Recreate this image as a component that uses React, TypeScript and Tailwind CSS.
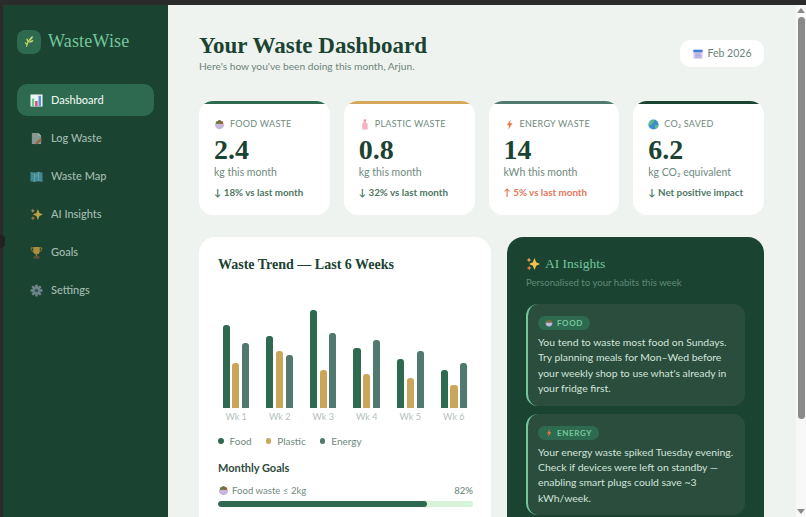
import type { ReactNode } from "react";

const serif = "font-['Liberation_Serif',serif]";

function ChartIcon() {
  return (
    <svg viewBox="0 0 14 14" className="w-[13px] h-[13px]">
      <rect x="0.5" y="0.5" width="13" height="13" fill="#eef2f4" />
      <rect x="2" y="5" width="2.6" height="8" fill="#5fd08a" />
      <rect x="5.6" y="7.5" width="2.6" height="5.5" fill="#e8407a" />
      <rect x="9.2" y="2" width="2.6" height="11" fill="#4a8fe0" />
    </svg>
  );
}

function PageIcon() {
  return (
    <svg viewBox="0 0 14 14" className="w-[13px] h-[13px]">
      <path d="M2 1h7l3 3v9H2z" fill="#a9b3ae" />
      <path d="M9 1l3 3H9z" fill="#d5dbd8" />
      <path d="M11.5 6.5l1.5 1.5-5 5-2 .4.4-2z" fill="#c9694a" />
    </svg>
  );
}

function MapIcon() {
  return (
    <svg viewBox="0 0 14 14" className="w-[13px] h-[13px]">
      <path d="M0.5 2l4.3 1 4.4-1 4.3 1v10l-4.3-1-4.4 1-4.3-1z" fill="#4c9fb5" />
      <path d="M4.8 3v10M9.2 2v10" stroke="#9fd4de" strokeWidth="0.7" />
      <path d="M6 5l2-1 .6 2-1 2-1.4-1z" fill="#6fb98a" />
    </svg>
  );
}

function SparkIcon({ size = 13 }: { size?: number }) {
  return (
    <svg viewBox="0 0 14 14" style={{ width: size, height: size }}>
      <path d="M8.5 1L10.2 5.3 14 7 10.2 8.7 8.5 13 6.8 8.7 3 7 6.8 5.3z" fill="#f2c14e" />
      <path d="M3 0.5l.7 1.8 1.8.7-1.8.7L3 5.5l-.7-1.8L.5 3l1.8-.7z" fill="#f5a65b" />
      <path d="M3.2 8.5l.7 1.8 1.8.7-1.8.7-.7 1.8-.7-1.8-1.8-.7 1.8-.7z" fill="#f08a4b" />
    </svg>
  );
}

function TrophyIcon() {
  return (
    <svg viewBox="0 0 14 14" className="w-[13px] h-[13px]">
      <path d="M3.5 1h7v4.5a3.5 3.5 0 0 1-7 0z" fill="#d9a93f" />
      <path d="M3.5 2H1.2c0 2.6 1 3.8 2.6 4M10.5 2h2.3c0 2.6-1 3.8-2.6 4" fill="none" stroke="#c9973a" strokeWidth="1" />
      <rect x="6.2" y="8.5" width="1.6" height="2.5" fill="#b98b35" />
      <rect x="4" y="11" width="6" height="2.5" fill="#7a5a3a" />
    </svg>
  );
}

function GearIcon() {
  return (
    <svg viewBox="0 0 14 14" className="w-[13px] h-[13px]">
      <g fill="#8b9aa6">
        <circle cx="7" cy="7" r="4.6" />
        {[0, 45, 90, 135].map((a) => (
          <rect key={a} x="5.7" y="0.5" width="2.6" height="13" rx="0.6" transform={`rotate(${a} 7 7)`} />
        ))}
      </g>
      <circle cx="7" cy="7" r="2" fill="#3f5f6a" />
    </svg>
  );
}

function BowlIcon({ size = 11 }: { size?: number }) {
  return (
    <svg viewBox="0 0 14 14" style={{ width: size, height: size }}>
      <circle cx="4.5" cy="5" r="2.4" fill="#5e8a4a" />
      <circle cx="9.5" cy="5" r="2.4" fill="#a9623f" />
      <circle cx="7" cy="3.8" r="2.4" fill="#7c6b3f" />
      <path d="M1 6.5h12c0 4-2.5 6.5-6 6.5s-6-2.5-6-6.5z" fill="#c9b6dc" />
    </svg>
  );
}

function BottleIcon() {
  return (
    <svg viewBox="0 0 14 14" className="w-[11px] h-[11px]">
      <rect x="6" y="0.5" width="3" height="2" fill="#e88ea8" />
      <path d="M5.8 2.5h3.4v2c1.3.7 1.8 1.5 1.8 3V13.5H4V7.5c0-1.5.5-2.3 1.8-3z" fill="#f3b4c4" />
    </svg>
  );
}

function BoltIcon({ size = 11 }: { size?: number }) {
  return (
    <svg viewBox="0 0 14 14" style={{ width: size, height: size }}>
      <path d="M8.5 0.5L3.5 8h3l-1 5.5L11 5.5H7.7z" fill="#ee7a45" />
    </svg>
  );
}

function GlobeIcon() {
  return (
    <svg viewBox="0 0 14 14" className="w-[11px] h-[11px]">
      <circle cx="7" cy="7" r="6.5" fill="#3b8fd0" />
      <path d="M3 2.5c2-1.500 4.500-1.500 5.500-.5-.5 1.500-2 1.500-2.500 3S4 7.500 2.500 8 .8 5 3 2.500z" fill="#5fbf7a" />
      <path d="M9 8c1.500-.5 3-.5 4 0-.5 2-1.500 3.500-3 4.500-1-1-1.500-3-1-4.500z" fill="#5fbf7a" />
    </svg>
  );
}

function CalendarIcon() {
  return (
    <svg viewBox="0 0 14 14" className="w-[10px] h-[10px]">
      <rect x="0.5" y="1" width="13" height="12.5" rx="1" fill="#d6cdf0" />
      <rect x="0.5" y="1" width="13" height="3.5" rx="1" fill="#3f7fd8" />
      <path d="M2.5 7h9M2.5 9.2h9M2.5 11.4h9M4.5 5.5v7M7 5.5v7M9.5 5.5v7" stroke="#a596d8" strokeWidth="0.7" />
    </svg>
  );
}

function LeafLogo() {
  return (
    <svg viewBox="0 0 16 16" className="w-[13px] h-[13px]">
      <path d="M4.5 14C5 10 7 6.500 10 4" fill="none" stroke="#c9e265" strokeWidth="1.3" strokeLinecap="round" />
      <path d="M9 6c-.5-2.500.8-4 2.800-4.800.6 2.300-.4 4-2.800 4.800z" fill="#c9e265" />
      <path d="M7 9c.8-1.800 3-3 6-2.500-1 2.300-3 3.300-6 2.500z" fill="#c9e265" />
      <path d="M6.300 8.500C4.800 7.600 4 6 4.300 4c1.900.8 2.700 2.400 2 4.500z" fill="#c9e265" />
      <path d="M5.300 12C3.800 11.700 2.500 10.500 2 8.800c2-.2 3.200.9 3.300 3.200z" fill="#c9e265" />
    </svg>
  );
}

const nav: { label: string; icon: ReactNode; active?: boolean }[] = [
  { label: "Dashboard", icon: <ChartIcon />, active: true },
  { label: "Log Waste", icon: <PageIcon /> },
  { label: "Waste Map", icon: <MapIcon /> },
  { label: "AI Insights", icon: <SparkIcon /> },
  { label: "Goals", icon: <TrophyIcon /> },
  { label: "Settings", icon: <GearIcon /> },
];

const stats = [
  { label: "Food Waste", icon: <BowlIcon />, value: "2.4", unit: "kg this month", delta: "↓ 18% vs last month", top: "bg-[#2d6a4f]", tone: "text-[#4f7765]" },
  { label: "Plastic Waste", icon: <BottleIcon />, value: "0.8", unit: "kg this month", delta: "↓ 32% vs last month", top: "bg-[#d4a95a]", tone: "text-[#4f7765]" },
  { label: "Energy Waste", icon: <BoltIcon />, value: "14", unit: "kWh this month", delta: "↑ 5% vs last month", top: "bg-[#52796f]", tone: "text-[#e4785a]" },
  { label: "CO₂ Saved", icon: <GlobeIcon />, value: "6.2", unit: "kg CO₂ equivalent", delta: "↓ Net positive impact", top: "bg-[#1b4332]", tone: "text-[#4f7765]" },
];

const weeks = [
  { label: "Wk 1", food: 83, plastic: 45, energy: 65 },
  { label: "Wk 2", food: 72, plastic: 57, energy: 53 },
  { label: "Wk 3", food: 98, plastic: 38, energy: 75 },
  { label: "Wk 4", food: 60, plastic: 34, energy: 68 },
  { label: "Wk 5", food: 49, plastic: 30, energy: 57 },
  { label: "Wk 6", food: 38, plastic: 23, energy: 45 },
];

function InsightCard({ icon, tag, lines }: { icon: ReactNode; tag: string; lines: string[] }) {
  return (
    <div className="bg-[#2a4d3e] border-l-2 border-[#74c69d] rounded-xl pl-[10px] pr-2 pt-3 pb-[9px]">
      <div className="flex w-fit items-center gap-[4px] h-[14px] px-[7px] rounded-full bg-[#2d6a4f] text-[#74c69d] text-[8px] font-bold tracking-[0.08em]">
        {icon}
        {tag}
      </div>
      <div className="mt-[5px] text-[10.4px] leading-[15.4px] text-[#d4e4da]">
        {lines.map((l) => (
          <div key={l} className="whitespace-nowrap">{l}</div>
        ))}
      </div>
    </div>
  );
}

export default function App() {
  return (
    <div className="h-screen overflow-hidden flex flex-col bg-[#2b2b2b] font-['Lato',sans-serif]">
      <div className="h-[5px] shrink-0" />
      <div className="flex flex-1 min-h-0 relative">
        <div className="absolute left-0 top-[230px] w-[5px] h-[13px] rounded-r-sm bg-[#222]" />
        <div className="w-[3px] shrink-0" />
        <aside className="w-[165px] shrink-0 bg-[#1b4332] px-[14px] pt-[24px]">
          <div className="flex items-center gap-[7px] h-[25px]">
            <div className="w-[24px] h-[24px] rounded-lg bg-[#2d6a4f] flex items-center justify-center">
              <LeafLogo />
            </div>
            <span className={`${serif} text-[18px] text-[#74c69d] tracking-[0.01em]`}>WasteWise</span>
          </div>
          <nav className="mt-[30px] flex flex-col gap-[6px]">
            {nav.map((n) => (
              <div
                key={n.label}
                className={`flex items-center gap-[8px] h-[32px] pl-[13px] rounded-[10px] text-[11px] font-medium ${
                  n.active ? "bg-[#2d6a4f] text-[#e8f5ee]" : "text-[#a3bdb0]"
                }`}
              >
                <span className={n.active ? "" : "opacity-75"}>{n.icon}</span>
                {n.label}
              </div>
            ))}
          </nav>
        </aside>
        <main className="flex-1 min-w-0 overflow-hidden bg-[#eff3f0] pl-[31px] pr-[32px] pt-[27px]">
          <div className="flex items-start justify-between h-[69px]">
            <div>
              <h1 className={`${serif} text-[23px] leading-[27px] font-bold text-[#1b4332]`}>Your Waste Dashboard</h1>
              <p className="text-[10.2px] leading-[14px] text-[#6b8578]">Here's how you've been doing this month, Arjun.</p>
            </div>
            <div className="mt-[8px] w-[84px] h-[27px] rounded-[10px] bg-white flex items-center justify-center gap-[5px] text-[10.5px] text-[#6b8578]">
              <CalendarIcon />
              Feb 2026
            </div>
          </div>

          <div className="grid grid-cols-4 gap-[14px]">
            {stats.map((s) => (
              <div key={s.label} className="h-[114px] bg-white rounded-[14px] overflow-hidden">
                <div className={`h-[3px] ${s.top}`} />
                <div className="px-[15px] pt-[14px]">
                  <div className="flex items-center gap-[5px] h-[12px] text-[9px] uppercase tracking-[0.03em] text-[#6f8a7e]">
                    <span className="w-[11px] flex justify-center">{s.icon}</span>
                    {s.label}
                  </div>
                  <div className={`${serif} mt-[5px] text-[28px] leading-[30px] font-bold text-[#1b4332]`}>{s.value}</div>
                  <div className="text-[10.5px] leading-[14px] text-[#6f8a7e]">{s.unit}</div>
                  <div className={`mt-[6px] text-[9.8px] leading-[14px] font-bold whitespace-nowrap ${s.tone}`}>{s.delta}</div>
                </div>
              </div>
            ))}
          </div>

          <div className="mt-[22px] flex gap-4 items-start">
            <section className="w-[292px] shrink-0 bg-white rounded-2xl pl-[19px] pr-[18px] pt-[19px] pb-[40px]">
              <h2 className={`${serif} text-[14px] leading-[18px] font-bold text-[#1b4332]`}>Waste Trend — Last 6 Weeks</h2>
              <div className="mt-[26px] h-[108px] flex items-end justify-between pl-[4.5px] pr-[5.5px]">
                {weeks.map((w) => (
                  <div key={w.label} className="flex items-end gap-[2.4px]">
                    <div className="w-[7.3px] rounded-t-[3px] bg-[#2d6a4f]" style={{ height: w.food }} />
                    <div className="w-[7.3px] rounded-t-[3px] bg-[#c9a659]" style={{ height: w.plastic }} />
                    <div className="w-[7.3px] rounded-t-[3px] bg-[#52796f]" style={{ height: w.energy }} />
                  </div>
                ))}
              </div>
              <div className="mt-[3px] flex justify-between pl-[4.5px] pr-[5.5px]">
                {weeks.map((w) => (
                  <span key={w.label} className="w-[27.3px] text-center text-[9px] leading-[12px] text-[#b4c0ba]">{w.label}</span>
                ))}
              </div>
              <div className="mt-[11px] flex gap-[14px] text-[10px] leading-[14px] text-[#6f8a7e]">
                {[
                  ["Food", "bg-[#2d6a4f]"],
                  ["Plastic", "bg-[#c9a659]"],
                  ["Energy", "bg-[#52796f]"],
                ].map(([name, color]) => (
                  <span key={name} className="flex items-center gap-[6px]">
                    <i className={`w-[5.5px] h-[5.5px] rounded-full ${color}`} />
                    {name}
                  </span>
                ))}
              </div>
              <h3 className="mt-[13px] text-[11px] leading-[14px] font-bold text-[#2f4a3e]">Monthly Goals</h3>
              <div className="mt-[9px] flex items-center justify-between text-[9.6px] leading-[13px] text-[#6f8a7e]">
                <span className="flex items-center gap-[3px]"><BowlIcon />Food waste ≤ 2kg</span>
                <span className="font-medium">82%</span>
              </div>
              <div className="mt-[4px] h-[6px] rounded-full bg-[#d8f3dc] overflow-hidden">
                <div className="h-full w-[82%] rounded-full bg-[#2d6a4f]" />
              </div>
            </section>

            <section className="flex-1 min-w-0 bg-[#1b4332] rounded-2xl px-[19px] pt-[18px] pb-5">
              <div className="flex items-center gap-[5px]">
                <SparkIcon size={14} />
                <h2 className={`${serif} text-[13.5px] leading-[18px] text-[#74c69d]`}>AI Insights</h2>
              </div>
              <p className="mt-[3px] text-[9.6px] leading-[13px] text-[#5f8a76]">Personalised to your habits this week</p>
              <div className="mt-[15px] flex flex-col gap-2">
                <InsightCard
                  icon={<BowlIcon size={8} />}
                  tag="FOOD"
                  lines={["You tend to waste most food on Sundays.", "Try planning meals for Mon–Wed before", "your weekly shop to use what's already in", "your fridge first."]}
                />
                <InsightCard
                  icon={<BoltIcon size={8} />}
                  tag="ENERGY"
                  lines={["Your energy waste spiked Tuesday evening.", "Check if devices were left on standby —", "enabling smart plugs could save ~3", "kWh/week."]}
                />
              </div>
            </section>
          </div>
        </main>
        <div className="w-[10px] shrink-0 bg-[#f8f8f8] flex flex-col items-center justify-between py-[3px]">
          <div className="flex flex-col items-center gap-[4px]">
            <i className="w-0 h-0 border-x-[4px] border-x-transparent border-b-[5px] border-b-[#8a8a8a]" />
            <i className="w-[7px] h-[402px] rounded-full bg-[#8a8a8a]" />
          </div>
          <i className="w-0 h-0 border-x-[4px] border-x-transparent border-t-[5px] border-t-[#8a8a8a]" />
        </div>
      </div>
    </div>
  );
}
